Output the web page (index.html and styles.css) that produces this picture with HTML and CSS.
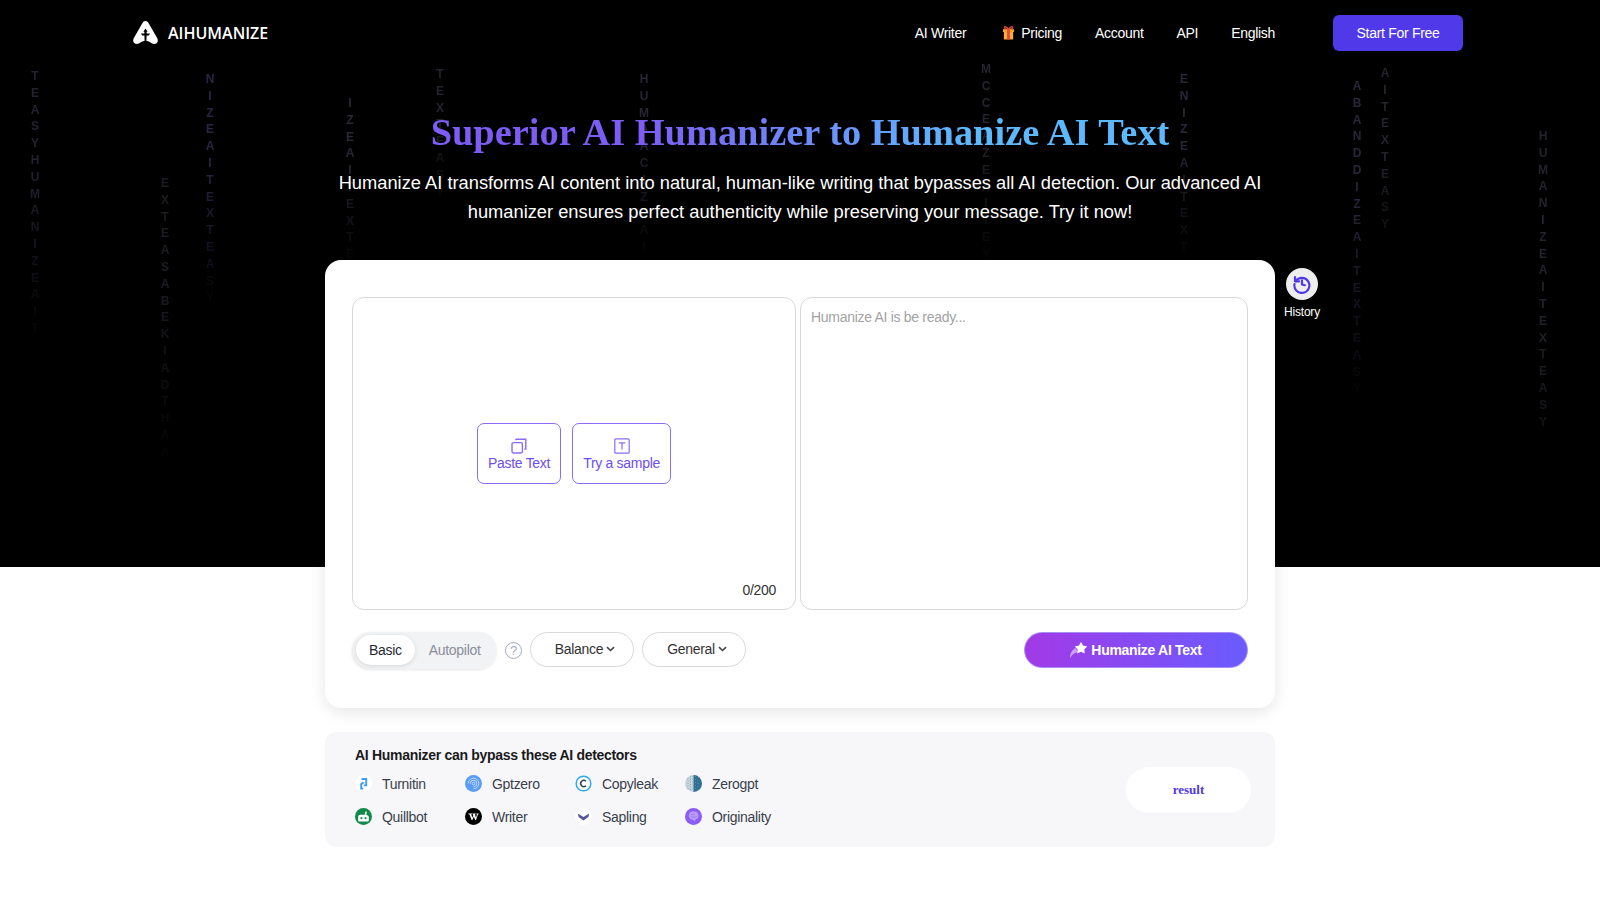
FILE: index.html
```html
<!DOCTYPE html>
<html lang="en">
<head>
    <meta charset="UTF-8">
    <meta name="viewport" content="width=device-width, initial-scale=1.0">
    <title>AI Humanizer</title>
    <link rel="stylesheet" href="styles.css">
</head>
<body>
    <section class="hero">
        <div class="rain">
            <span class="rain-col col-1 trail">TEASYHUMANIZEAIT</span>
            <span class="rain-col col-2">EXTEASABEKIADTHAA</span>
            <span class="rain-col col-3 trail">NIZEAITEXTEASY</span>
            <span class="rain-col col-4">IZEAITEXTE</span>
            <span class="rain-col col-5 trail">TEXTEASY</span>
            <span class="rain-col col-6">HUMAACIZEAI</span>
            <span class="rain-col col-7 trail">MCCEAZEAITEX</span>
            <span class="rain-col col-8 trail">ENIZEAITEXT</span>
            <span class="rain-col col-9">ABANDDIZEAITEXTEASY</span>
            <span class="rain-col col-10 trail">AITEXTEASY</span>
            <span class="rain-col col-11">HUMANIZEAITEXTEASY</span>
        </div>

        <header class="navbar">
            <a class="logo" href="#">
                <svg width="25" height="23" viewBox="0 0 25 23">
                    <path fill="#fff" d="M12.5 0C13.9 0 14.8 .9 15.5 2.1L24 16.8C26 20.3 24.2 23 21.2 23 18.2 23 16.5 19.8 12.5 19.8 8.5 19.8 6.8 23 3.8 23 .8 23-1 20.3 1 16.8L9.5 2.1C10.2 .9 11.1 0 12.5 0Z"/>
                    <path fill="#000" d="M12.5 7.5L14.6 10.8H13.6V12.4H17L15.8 14.6H13.6L13.4 20.2H11.6L11.4 14.6H9.2L8 12.4H11.4V10.8H10.4Z"/>
                </svg>
                <span>AIHUMANIZE</span>
            </a>
            <nav class="nav-links">
                <a href="#">AI Writer</a>
                <a href="#" class="nav-pricing">
                    <svg width="13" height="15" viewBox="0 0 14 15">
                        <path fill="none" stroke="#e8453c" stroke-width="1.4" d="M7 4C5 1 2.5 .6 2.6 2.4 2.7 3.8 5 4 7 4 9 4 11.3 3.8 11.4 2.4 11.5 .6 9 1 7 4Z"/>
                        <rect x="1" y="4" width="12" height="3" fill="#f5a623"/>
                        <rect x="2" y="7" width="10" height="8" fill="#fbb03b"/>
                        <rect x="5.5" y="4" width="3" height="11" fill="#e8453c"/>
                    </svg>
                    Pricing
                </a>
                <a href="#">Account</a>
                <a href="#">API</a>
                <a href="#">English</a>
            </nav>
            <a class="btn-start" href="#">Start For Free</a>
        </header>

        <h1 class="hero-title">Superior AI Humanizer to Humanize AI Text</h1>
        <p class="hero-desc">Humanize AI transforms AI content into natural, human-like writing that bypasses all AI detection. Our advanced AI humanizer ensures perfect authenticity while preserving your message. Try it now!</p>
    </section>

    <main class="main">
        <div class="card">
            <div class="history">
                <span class="history-icon">
                    <svg width="20" height="20" viewBox="0 0 24 24" fill="none" stroke="#4f39e8" stroke-width="2.6" stroke-linecap="round" stroke-linejoin="round">
                        <path d="M4.5 8.5A9 9 0 1 1 3 12"/>
                        <path d="M3.6 3.8V8.8H8.6"/>
                        <path d="M12 7.5V12.5L15.5 13.5"/>
                    </svg>
                </span>
                <span>History</span>
            </div>

            <div class="editors">
                <div class="editor-input">
                    <button class="action-btn">
                        <svg width="16" height="16" viewBox="0 0 16 16" fill="none" stroke="#8b6cf6" stroke-width="1.4">
                            <rect x="1" y="4.6" width="10.4" height="10.4" rx="1.4"/>
                            <path d="M5 2.2V1.2H14.8V11H13.4"/>
                        </svg>
                        Paste Text
                    </button>
                    <button class="action-btn">
                        <svg width="16" height="16" viewBox="0 0 16 16" fill="none" stroke="#8b6cf6" stroke-width="1.2">
                            <rect x=".8" y=".8" width="14.4" height="14.4" rx="1"/>
                            <path d="M4.8 4.8H11.2M8 4.8V11.6"/>
                        </svg>
                        Try a sample
                    </button>
                    <span class="counter">0/200</span>
                </div>
                <textarea class="editor-output" placeholder="Humanize AI is be ready..."></textarea>
            </div>

            <div class="controls">
                <div class="mode-toggle">
                    <span class="mode active">Basic</span>
                    <span class="mode">Autopilot</span>
                </div>
                <span class="help">?</span>
                <button class="select-btn select-balance">Balance<svg width="9" height="6" viewBox="0 0 9 6" fill="none" stroke="#444" stroke-width="1.6"><path d="M1 1.2L4.5 4.5 8 1.2"/></svg></button>
                <button class="select-btn select-general">General<svg width="9" height="6" viewBox="0 0 9 6" fill="none" stroke="#444" stroke-width="1.6"><path d="M1 1.2L4.5 4.5 8 1.2"/></svg></button>
                <button class="btn-humanize">
                    <svg width="18" height="16" viewBox="0 0 18 16">
                        <path fill="#fff" opacity=".5" d="M0 16C0 11 2 8 5.500 6L8 10C4.500 10.500 2 12.500 0 16Z"/>
                        <path fill="#fff" d="M11 0L13 3.600 17.200 4.400 14.300 7.500 14.800 11.600 11 9.800 7.200 11.600 7.700 7.500 4.800 4.400 9 3.600Z"/>
                    </svg>
                    Humanize AI Text
                </button>
            </div>
        </div>

        <div class="detectors">
            <div class="detectors-body">
                <h2 class="detectors-title">AI Humanizer can bypass these AI detectors</h2>
                <ul class="detector-list">
                    <li>
                        <svg width="17" height="17" viewBox="0 0 17 17">
                            <circle cx="8.500" cy="8.500" r="8.500" fill="#fff"/>
                            <path fill="none" stroke="#3d9df2" stroke-width="1.900" d="M6.500 4H11.200V10.400H8.800"/>
                            <path fill="none" stroke="#3d9df2" stroke-width="1.900" d="M8.600 7.200L6.200 9.200V13.600H8.200"/>
                        </svg>
                        Turnitin
                    </li>
                    <li>
                        <svg width="17" height="17" viewBox="0 0 17 17" fill="none">
                            <circle cx="8.500" cy="8.500" r="8.500" fill="#5b9cf5"/>
                            <g stroke="#c3daf9" stroke-width="1">
                                <path d="M3.200 8.500A5.300 5.300 0 1 1 8.500 13.800"/>
                                <path d="M5.200 8.500A3.300 3.300 0 1 1 8.500 11.800"/>
                                <circle cx="8.500" cy="8.500" r="1.300"/>
                            </g>
                        </svg>
                        Gptzero
                    </li>
                    <li>
                        <svg width="17" height="17" viewBox="0 0 17 17" fill="none">
                            <circle cx="8.500" cy="8.500" r="7.300" fill="#fff" stroke="#29a9f0" stroke-width="1.500"/>
                            <path stroke="#39404f" stroke-width="1.500" d="M11 6.300A3.100 3.100 0 1 0 11 10.700"/>
                        </svg>
                        Copyleak
                    </li>
                    <li>
                        <svg width="17" height="17" viewBox="0 0 17 17">
                            <circle cx="8.500" cy="8.500" r="8.500" fill="#c7d5dc"/>
                            <path fill="#2f6f94" d="M8.500 0A8.500 8.500 0 0 1 8.500 17Z"/>
                            <path fill="none" stroke="#8aa6b5" stroke-width="1" stroke-dasharray="1 1.500" d="M3 3V14M5.500 1.500V15.500M8 1V16"/>
                            <path fill="none" stroke="#6d9bb5" stroke-width=".7" stroke-dasharray="1 2" d="M10.500 1V16M13 2V15"/>
                        </svg>
                        Zerogpt
                    </li>
                    <li>
                        <svg width="17" height="17" viewBox="0 0 17 17">
                            <circle cx="8.500" cy="8.500" r="8.500" fill="#128a4a"/>
                            <path fill="#fff" d="M3.200 9C3.200 7.500 4.200 6.800 5.500 6.800H9.800L10.200 3.400 11.800 3.800 11.300 6.900C12.800 7 13.800 7.800 13.800 9V12.200C13.800 13 13.300 13.500 12.500 13.500H4.500C3.700 13.500 3.200 13 3.200 12.200Z"/>
                            <rect x="5.500" y="9.200" width="1.900" height="1.900" fill="#128a4a"/>
                            <rect x="9.600" y="9.200" width="1.900" height="1.900" fill="#128a4a"/>
                        </svg>
                        Quillbot
                    </li>
                    <li>
                        <svg width="17" height="17" viewBox="0 0 17 17">
                            <circle cx="8.500" cy="8.500" r="8.500" fill="#000"/>
                            <path fill="#fff" d="M3.400 5.500H7V6.300H6.200L7.300 9.700 8.300 7 7.900 6.300H7.400V5.500H10.700V6.300H9.900L11 9.700 12 6.300H11.300V5.500H13.600V6.300H13L11 12H10.200L8.800 8.400 7.400 12H6.600L4.400 6.300H3.400Z"/>
                        </svg>
                        Writer
                    </li>
                    <li>
                        <svg width="17" height="17" viewBox="0 0 17 17">
                            <circle cx="8.500" cy="8.500" r="8.500" fill="#fff"/>
                            <path fill="#55599c" d="M2.800 5.600L8.500 9 14.200 5.600 13.400 9 8.500 12.600 3.600 9Z"/>
                            <path fill="#fff" d="M7.800 6.400H9.200L8.500 8.400Z"/>
                        </svg>
                        Sapling
                    </li>
                    <li>
                        <svg width="17" height="17" viewBox="0 0 17 17">
                            <circle cx="8.500" cy="8.500" r="8.500" fill="#8b5cf6"/>
                            <path fill="#b89cf0" d="M4 6C4.500 4 7 3 9 3.500 11.500 3.500 13.500 5 13.500 7.500 14 10 12 11 10.500 11.200L10 13.500 8 11.800C5.500 11.800 3 9.500 4 6Z"/>
                            <path fill="none" stroke="#8b5cf6" stroke-width=".6" d="M6 6.500C7 5.500 8 7.500 9.500 6.300M6 9C7.500 8.200 9 10 11.500 8.500"/>
                        </svg>
                        Originality
                    </li>
                </ul>
            </div>
            <a class="result-pill" href="#">result</a>
        </div>
    </main>
</body>
</html>
```

FILE: styles.css
```css
* {
    box-sizing: border-box;
}
body {
    margin: 0;
    font-family: "Liberation Sans", Arial, sans-serif;
    font-size: 14px;
    letter-spacing: -0.3px;
    color: #333;
    background: #fff;
}
a {
    color: inherit;
    text-decoration: none;
}
button {
    font-family: inherit;
    font-size: 14px;
    letter-spacing: -0.3px;
    cursor: pointer;
}

/* hero */
.hero {
    position: relative;
    height: 567px;
    background: #000;
    color: #fff;
    overflow: hidden;
}
.rain {
    position: absolute;
    inset: 0;
}
.rain-col {
    position: absolute;
    writing-mode: vertical-rl;
    text-orientation: upright;
    font-size: 12px;
    font-weight: 700;
    letter-spacing: 2.8px;
    line-height: 14px;
    width: 14px;
    color: #2c2a38;
    -webkit-mask-image: linear-gradient(to bottom, #000 35%, rgba(0, 0, 0, 0.08) 100%);
    mask-image: linear-gradient(to bottom, #000 35%, rgba(0, 0, 0, 0.08) 100%);
}
.trail::before {
    content: "";
    position: absolute;
    left: 0;
    top: -40px;
    width: 14px;
    height: 36px;
    background: linear-gradient(to bottom, transparent, #0d0d14);
    filter: blur(2px);
}
.col-1 { left: 28px; top: 69px; color: #242230; }
.col-2 { left: 158px; top: 176px; color: #1d1c22; }
.col-3 { left: 203px; top: 72px; color: #292644; }
.col-4 { left: 343px; top: 96px; color: #2a2833; }
.col-5 { left: 433px; top: 67px; color: #25242c; }
.col-6 { left: 637px; top: 72px; color: #262531; }
.col-7 { left: 979px; top: 62px; color: #25242c; }
.col-8 { left: 1177px; top: 72px; color: #2a2838; }
.col-9 { left: 1350px; top: 79px; color: #292639; }
.col-10 { left: 1378px; top: 66px; color: #25242c; -webkit-mask-image: linear-gradient(to bottom, #000 50%, rgba(0, 0, 0, 0.4) 100%); mask-image: linear-gradient(to bottom, #000 50%, rgba(0, 0, 0, 0.4) 100%); }
.col-11 { left: 1536px; top: 129px; color: #24232b; -webkit-mask-image: linear-gradient(to bottom, #000 60%, rgba(0, 0, 0, 0.5) 100%); mask-image: linear-gradient(to bottom, #000 60%, rgba(0, 0, 0, 0.5) 100%); }

.navbar {
    position: relative;
    display: flex;
    align-items: center;
    height: 65px;
    padding: 0 137px 0 133px;
}
.logo {
    display: flex;
    align-items: center;
    gap: 10px;
    font-family: "Open Sans", sans-serif;
    font-size: 16px;
    font-weight: 600;
    letter-spacing: 0;
}
.nav-links {
    display: flex;
    align-items: center;
    gap: 33px;
    margin-left: auto;
    margin-right: 58px;
}
.nav-pricing {
    display: flex;
    align-items: center;
    gap: 6px;
    margin-left: 3px;
}
.btn-start {
    display: flex;
    align-items: center;
    justify-content: center;
    width: 130px;
    height: 36px;
    background: #4f39e8;
    border-radius: 6px;
}
.hero-title {
    position: relative;
    margin: 38px 0 0;
    font-family: "Liberation Serif", "Times New Roman", serif;
    font-size: 38.4px;
    letter-spacing: 0;
    line-height: 58px;
    font-weight: 700;
    text-align: center;
    background: linear-gradient(to right, #7d5cf5 0 28%, #5cb8ff 72%);
    background-size: 737px 100%;
    background-position: center;
    background-repeat: no-repeat;
    -webkit-background-clip: text;
    background-clip: text;
    color: transparent;
}
.hero-desc {
    position: relative;
    width: 960px;
    margin: 7px auto 0;
    font-size: 18.3px;
    letter-spacing: 0;
    line-height: 29px;
    text-align: center;
}

/* tool card */
.main {
    position: relative;
    width: 950px;
    margin: -307px auto 0;
    padding-bottom: 53px;
}
.card {
    position: relative;
    height: 448px;
    padding: 37px 27px 0;
    background: #fff;
    border-radius: 16px;
    box-shadow: 0 4px 16px rgba(0, 0, 0, 0.1);
}
.history {
    position: absolute;
    left: 100%;
    top: 8px;
    width: 54px;
    display: flex;
    flex-direction: column;
    align-items: center;
    gap: 5px;
    font-size: 12px;
    letter-spacing: -0.2px;
    color: #fff;
}
.history-icon {
    display: flex;
    align-items: center;
    justify-content: center;
    width: 32px;
    height: 32px;
    background: #eee;
    border-radius: 50%;
}
.editors {
    display: flex;
    gap: 4px;
    height: 313px;
}
.editor-input {
    position: relative;
    display: flex;
    align-items: center;
    justify-content: center;
    gap: 11px;
    width: 444px;
    border: 1px solid #d9d9d9;
    border-radius: 12px;
}
.editor-output {
    flex: 1;
    padding: 10px 10px;
    border: 1px solid #d9d9d9;
    border-radius: 12px;
    font-family: inherit;
    font-size: 14px;
    letter-spacing: -0.3px;
    line-height: 18px;
    resize: none;
    outline: none;
}
.editor-output::placeholder {
    color: #a3a3a3;
    opacity: 1;
}
.action-btn {
    display: flex;
    flex-direction: column;
    align-items: center;
    gap: 1px;
    width: auto;
    height: 61px;
    padding: 14px 10px 0;
    background: #fff;
    border: 1.5px solid #8b6cf6;
    border-radius: 7px;
    color: #6d4ef0;
}
.counter {
    position: absolute;
    right: 19px;
    bottom: 11px;
    color: #333;
}
.controls {
    display: flex;
    align-items: flex-start;
    margin-top: 22px;
    height: 37px;
}
.mode-toggle {
    display: flex;
    align-items: center;
    width: 144px;
    height: 37px;
    padding: 0 3px 2px;
    margin-left: 1px;
    background: #f2f3f5;
    border-radius: 18px;
    box-shadow: -1px 1px 3px rgba(0, 0, 0, 0.1);
}
.mode {
    padding: 0 14px;
    line-height: 30px;
    color: #8a8f9c;
}
.mode.active {
    width: 59px;
    padding: 0 13px;
    background: #fff;
    border-radius: 15px;
    color: #1f2937;
    box-shadow: 0 1px 4px rgba(0, 0, 0, 0.12);
}
.help {
    display: flex;
    align-items: center;
    justify-content: center;
    width: 17px;
    height: 17px;
    margin: 10px 8px 0;
    border: 1.5px solid #a3a8c3;
    border-radius: 50%;
    font-size: 13px;
    letter-spacing: 0;
    color: #a3a8c3;
}
.select-btn {
    display: flex;
    align-items: center;
    justify-content: center;
    gap: 3px;
    width: 104px;
    height: 35px;
    padding: 0 0 1px 6px;
    background: #fff;
    border: 1px solid #d9d9d9;
    border-radius: 18px;
    color: #333;
}
.select-general {
    margin-left: 8px;
}
.btn-humanize {
    display: flex;
    align-items: center;
    justify-content: center;
    gap: 3px;
    width: 224px;
    height: 36px;
    margin-left: auto;
    padding: 0 0 1px;
    background: linear-gradient(to right, #a23ae6, #6a5cff);
    border: 1px solid #a98cf5;
    border-radius: 18px;
    color: #fff;
    font-weight: 700;
}

/* detectors */
.detectors {
    display: flex;
    align-items: flex-start;
    justify-content: space-between;
    height: 115px;
    margin-top: 24px;
    padding: 15px 24px 0 30px;
    background: #f7f7fa;
    border-radius: 12px;
}
.detectors-title {
    margin: 0 0 12px;
    font-size: 14px;
    line-height: 16px;
    color: #1a1a1a;
}
.detector-list {
    display: grid;
    grid-template-columns: repeat(4, 110px);
    grid-auto-rows: 17px;
    row-gap: 16px;
    margin: 0;
    padding: 0;
    list-style: none;
}
.detector-list li {
    display: flex;
    align-items: center;
    gap: 10px;
    color: #3a3f4b;
}
.result-pill {
    display: flex;
    align-items: center;
    justify-content: center;
    width: 125px;
    height: 46px;
    margin-top: 20px;
    background: #fff;
    border-radius: 23px;
    font-family: "Liberation Serif", serif;
    font-size: 13px;
    font-weight: 700;
    letter-spacing: 0;
    color: #4f39e8;
}
```
